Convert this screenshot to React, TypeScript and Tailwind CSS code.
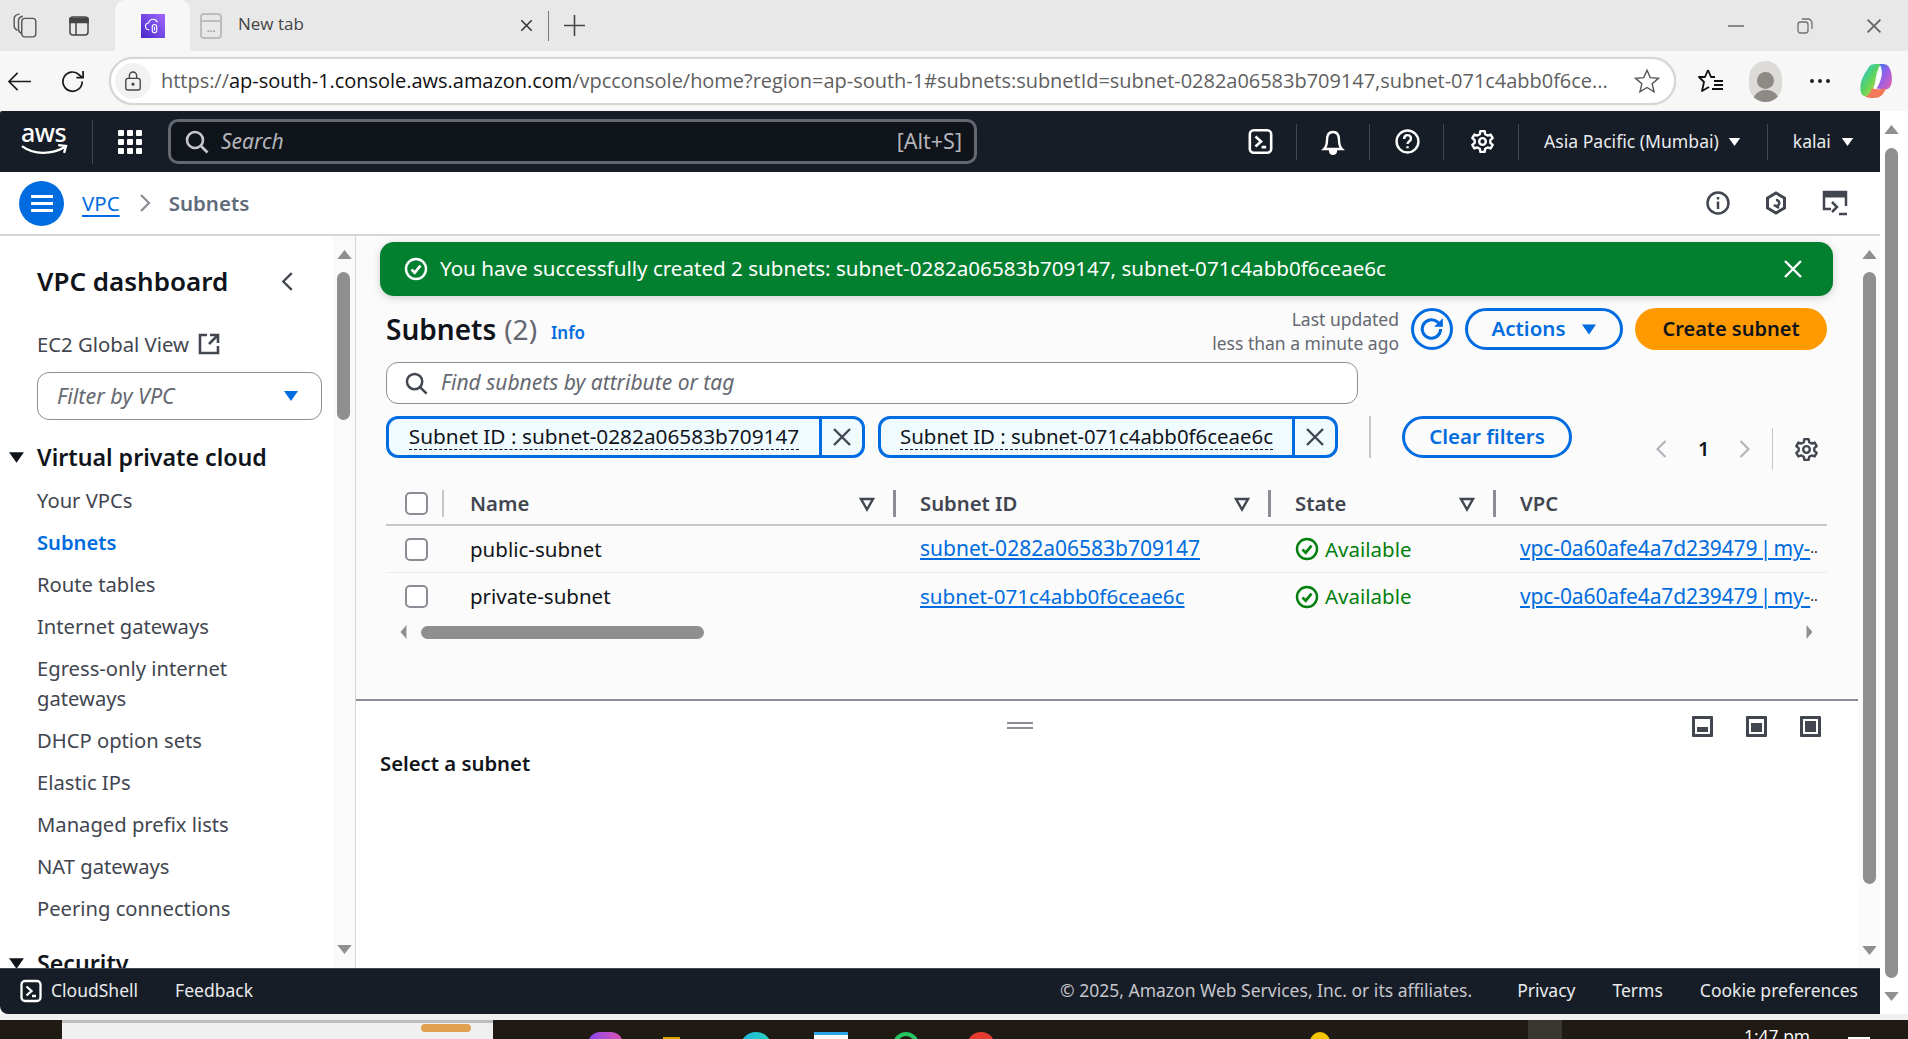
import React from "react";

const Tri = ({ className = "" }: { className?: string }) => (
  <svg viewBox="0 0 16 12" className={className} fill="currentColor"><path d="M1 1h14L8 11z" /></svg>
);
const FilterTri = () => (
  <svg viewBox="0 0 16 16" className="w-4 h-4 text-[#424650]" fill="none" stroke="currentColor" strokeWidth="2.4"><path d="M2 3h12L8 13.5z" /></svg>
);
const X = ({ className = "" }: { className?: string }) => (
  <svg viewBox="0 0 20 20" className={className} fill="none" stroke="currentColor" strokeWidth="2.4"><path d="M2 2l16 16M18 2L2 18" /></svg>
);
const Check = ({ className = "" }: { className?: string }) => (
  <svg viewBox="0 0 24 24" className={className} fill="none" stroke="currentColor" strokeWidth="2.4"><circle cx="12" cy="12" r="10" /><path d="M7.5 12.5l3.2 3.2 5.8-7" strokeWidth="2.6" /></svg>
);
const Gear = ({ className = "" }: { className?: string }) => (
  <svg viewBox="0 0 24 24" className={className} fill="none" stroke="currentColor" strokeWidth="2.3" strokeLinejoin="round"><circle cx="12" cy="12" r="3.2" /><path d="M10 2h4l.6 3 2.3 1.3 2.9-1 2 3.4-2.3 2 0 2.6 2.3 2-2 3.4-2.9-1-2.3 1.3-.6 3h-4l-.6-3-2.3-1.3-2.9 1-2-3.4 2.3-2 0-2.6-2.3-2 2-3.4 2.9 1L9.4 5z" /></svg>
);
const Search = ({ className = "" }: { className?: string }) => (
  <svg viewBox="0 0 24 24" className={className} fill="none" stroke="currentColor" strokeWidth="2.6"><circle cx="10" cy="10" r="8" /><path d="M16 16l6.5 6.5" /></svg>
);
const Chevron = ({ dir, className = "" }: { dir: "l" | "r"; className?: string }) => (
  <svg viewBox="0 0 12 20" className={className} fill="none" stroke="currentColor" strokeWidth="2.2"><path d={dir === "l" ? "M10 2L2 10l8 8" : "M2 2l8 8-8 8"} /></svg>
);
const Terminal = ({ className = "" }: { className?: string }) => (
  <svg viewBox="0 0 24 24" className={className} fill="none" stroke="currentColor" strokeWidth="2.3"><rect x="2.5" y="2" width="19" height="20" rx="3.5" /><path d="M7.5 7.5l5 4.5-5 4.5M13 17h4" /></svg>
);
const Sep = () => <div className="w-px h-[36px] bg-[#424650]" />;
const PanelIcon = ({ fill }: { fill: string }) => (
  <div className="w-[21px] h-[21px] border-[3px] border-[#424650] flex items-end p-[2px] rounded-[1px]">
    <div className={`w-full bg-[#424650] ${fill}`} />
  </div>
);

const ThScroll = ({ up }: { up: boolean }) => (
  <svg viewBox="0 0 16 10" className="w-[15px] h-[9px] text-[#8f8f8f]" fill="currentColor"><path d={up ? "M8 0l8 10H0z" : "M8 10L0 0h16z"} /></svg>
);

const Chip = ({ text, w, size }: { text: string; w: string; size: string }) => (
  <div className={`h-[42px] ${w} border-[3px] border-[#006ce0] rounded-[12px] bg-[#f0fbff] flex items-center shrink-0`}>
    <div className="flex-1 flex justify-center">
      <span className={`${size} leading-[25px] text-[#0f141a] border-b border-dashed border-[#0f141a] whitespace-nowrap`}>{text}</span>
    </div>
    <div className="w-[43px] h-full border-l-[3px] border-[#006ce0] flex items-center justify-center text-[#424650]">
      <X className="w-[20px] h-[20px]" />
    </div>
  </div>
);

const HeaderCell = ({ label, w }: { label: string; w: string }) => (
  <div className={`${w} shrink-0 flex items-center justify-between h-full`}>
    <span className="text-[20.3px] font-semibold text-[#424650]">{label}</span>
    <div className="flex items-center gap-[18px] pr-[24px]">
      <FilterTri />
      <div className="w-[3px] h-[27px] bg-[#8c8c94]" />
    </div>
  </div>
);

const Row = ({ name, id, size, last }: { name: string; id: string; size: string; last?: boolean }) => (
  <div className={`flex items-center h-[47px] ${last ? "" : "border-b border-[#ebebf0]"}`}>
    <div className="w-[84px] pl-[19px] shrink-0">
      <div className="w-[23px] h-[23px] border-2 border-[#8c8c94] rounded-[5px] bg-white" />
    </div>
    <div className="w-[450px] shrink-0 text-[20.5px] text-[#0f141a]">{name}</div>
    <div className="w-[375px] shrink-0"><a className={`${size} text-[#006ce0] underline underline-offset-2`}>{id}</a></div>
    <div className="w-[225px] shrink-0 flex items-center text-[#037f0c] text-[20.5px]">
      <Check className="w-[24px] h-[24px]" />
      <span className="ml-[6px]">Available</span>
    </div>
    <div className="flex-1 text-[21px] whitespace-nowrap text-[#0f141a] flex">
      <a className="shrink-0 text-[#006ce0] underline underline-offset-2 [word-spacing:-3px] tracking-[-0.12px]">vpc-0a60afe4a7d239479 | my-</a><span className="text-[14px] leading-[30px]">..</span>
    </div>
  </div>
);

const navItems = ["Your VPCs", "Subnets", "Route tables", "Internet gateways", "Egress-only internet gateways", "DHCP option sets", "Elastic IPs", "Managed prefix lists", "NAT gateways", "Peering connections"];

export default function App() {
  return (
    <div className="w-[1908px] h-[1039px] overflow-hidden flex flex-col font-['Noto_Sans',sans-serif] bg-[#1d1a16]">
      {/* tab strip */}
      <div className="h-[51px] bg-[#e8e8e8] flex items-center shrink-0">
        <svg viewBox="0 0 24 24" className="w-[26px] h-[26px] ml-[12px] text-[#555]" fill="none" stroke="currentColor" strokeWidth="1.3"><rect x="9" y="5" width="13" height="17" rx="3" /><path d="M9 19c-2-1-3-2-3-4V6c1-2 2-3 4-3M5 16c-2-1-3-2-3-4V5c0-2 2-4 5-4" /></svg>
        <svg viewBox="0 0 24 24" className="w-[24px] h-[24px] ml-[29px] text-[#444]" fill="none" stroke="currentColor" strokeWidth="1.5"><rect x="3" y="3" width="18" height="18" rx="3" /><path d="M3 4.5h18v4H3zM9 8.5V21" fill="currentColor" /></svg>
        <div className="w-[75px] h-[51px] ml-[24px] bg-[#f7f7f7] rounded-t-[10px] flex items-center justify-center shrink-0">
          <div className="w-[24px] h-[24px] bg-gradient-to-tr from-[#4a25c9] to-[#a166ff] flex items-center justify-center">
            <svg viewBox="0 0 24 24" className="w-[18px] h-[18px] text-white" fill="none" stroke="currentColor" strokeWidth="1.5"><path d="M7 17c-3 0-5-2-5-5s2-4 4-4c1-3 3-5 6-5s5 2 6 4" /><rect x="11" y="10" width="6" height="11" rx="3" /><path d="M14 13v5" /></svg>
          </div>
        </div>
        <div className="w-[22px] h-[26px] ml-[10px] border-2 border-[#bdbdbd] rounded-[4px] flex flex-col items-center">
          <div className="w-full h-[7px] border-b-2 border-[#bdbdbd]" />
          <div className="text-[#9a9a9a] text-[10px] leading-[10px] font-bold mt-[1px]">...</div>
        </div>
        <span className="ml-[16px] -mt-[3px] text-[#444] text-[17px] font-['Open_Sans',sans-serif]">New tab</span>
        <X className="w-[13px] h-[13px] ml-[216px] text-[#333]" />
        <div className="w-px h-[30px] bg-[#777] ml-[15px]" />
        <svg viewBox="0 0 20 20" className="w-[21px] h-[21px] ml-[15px] text-[#444]" fill="none" stroke="currentColor" strokeWidth="1.5"><path d="M10 0v20M0 10h20" /></svg>
        <div className="ml-auto flex items-center gap-[53px] pr-[26px] text-[#707070]">
          <div className="w-[16px] h-[2px] bg-[#8a8a8a]" />
          <svg viewBox="0 0 16 16" className="w-[16px] h-[16px]" fill="none" stroke="currentColor" strokeWidth="1.3"><rect x="1" y="4" width="10" height="11" rx="2.5" /><path d="M5 1h6c2 0 4 2 4 4v6" /></svg>
          <X className="w-[16px] h-[16px] text-[#666]" />
        </div>
      </div>
      {/* toolbar */}
      <div className="h-[60px] bg-[#f7f7f7] flex items-center shrink-0">
        <svg viewBox="0 0 26 22" className="w-[25px] h-[21px] ml-[7px] text-[#1a1a1a]" fill="none" stroke="currentColor" strokeWidth="1.7"><path d="M25 11H2M11 2l-9 9 9 9" /></svg>
        <svg viewBox="0 0 26 26" className="w-[25px] h-[25px] ml-[29px] text-[#1a1a1a]" fill="none" stroke="currentColor" strokeWidth="1.8"><path d="M22 13a10 10 0 1 1-3-7l3 3M23 2v7h-7" /></svg>
        <div className="ml-[23px] w-[1567px] h-[48px] rounded-full border-2 border-[#d6d6d6] bg-white flex items-center pl-[4px] pr-[14px] shadow-[0_0_1px_#ccc]">
          <div className="w-[36px] h-[36px] rounded-full bg-[#f2f2f2] flex items-center justify-center shrink-0">
            <svg viewBox="0 0 20 22" className="w-[18px] h-[20px] text-[#444]" fill="none" stroke="currentColor" strokeWidth="1.5"><rect x="2" y="8" width="16" height="13" rx="2.5" /><path d="M6 8V5a4 4 0 0 1 8 0v3" /><circle cx="10" cy="14.5" r="1" fill="currentColor" /></svg>
          </div>
          <div className="ml-[10px] text-[20px] whitespace-nowrap font-['Open_Sans',sans-serif] tracking-[-0.03px] text-[#5f5f5f]">
            https://<span className="text-[#111]">ap-south-1.console.aws.amazon.com</span>/vpcconsole/home?region=ap-south-1#subnets:subnetId=subnet-0282a06583b709147,subnet-071c4abb0f6ce...
          </div>
          <svg viewBox="0 0 24 24" className="w-[26px] h-[26px] ml-auto text-[#555]" fill="none" stroke="currentColor" strokeWidth="1.3"><path d="M12 2l3 6.9 7.5.7-5.7 5 1.7 7.4L12 18l-6.5 4 1.7-7.4-5.7-5L9 8.900z" /></svg>
        </div>
        <svg viewBox="0 0 26 26" className="w-[26px] h-[26px] ml-[22px] text-[#111]" fill="none" stroke="currentColor" strokeWidth="1.8" strokeLinejoin="round"><path d="M10 2L7 9H1l5 5-2 9 7-4M10 2l3 7h4" /><path d="M16 13h9M16 17h9M14 21h11" /></svg>
        <div className="w-[33px] h-[41px] rounded-full bg-[#dcdbd8] ml-[25px] flex flex-col items-center justify-end overflow-hidden">
          <div className="w-[17px] h-[17px] rounded-full bg-[#8e8a85] mb-[1px]" />
          <div className="w-[26px] h-[12px] rounded-t-full bg-[#8e8a85]" />
        </div>
        <div className="ml-[28px] flex gap-[4px]">
          <div className="w-[4px] h-[4px] rounded-full bg-[#222]" /><div className="w-[4px] h-[4px] rounded-full bg-[#222]" /><div className="w-[4px] h-[4px] rounded-full bg-[#222]" />
        </div>
        <svg viewBox="0 0 34 38" className="w-[33px] h-[36px] ml-[30px]">
          <defs>
            <linearGradient id="ca" x1="0" y1="0" x2="1" y2="1"><stop offset="0" stopColor="#19c3e6" /><stop offset="0.5" stopColor="#5fd35b" /><stop offset="1" stopColor="#f6d33c" /></linearGradient>
            <linearGradient id="cb" x1="0" y1="0" x2="1" y2="1"><stop offset="0" stopColor="#2b7be8" /><stop offset="0.5" stopColor="#9b5fe8" /><stop offset="1" stopColor="#e85fa8" /></linearGradient>
          </defs>
          <path d="M10 3c2-2 5-2 8-2h4c-3 3-5 9-6 16s-3 18-10 18c-4 0-6-3-6-9 0-8 5-16 10-23z" fill="url(#ca)" />
          <path d="M20 1h4c5 0 8 4 9 12 1 9-1 15-7 15-3 0-6-1-9-1 4-6 9-18 3-26z" fill="url(#cb)" />
          <path d="M12 27c4 1 8 1 15 0-3 7-6 10-13 10-5 0-8-1-9-2 3 0 6-3 7-8z" fill="#f2795a" />
          <path d="M19 10h3c-1 6-2 11-5 16h-3c2-4 4-10 5-16z" fill="#fff" />
        </svg>
      </div>
      {/* page + browser scrollbar */}
      <div className="h-[903px] flex shrink-0 bg-white rounded-br-[8px]">
        <div className="w-[1880px] shrink-0 flex flex-col overflow-hidden rounded-bl-[8px]">
          {/* AWS bar */}
          <div className="h-[61px] bg-[#161d26] flex items-center shrink-0 rounded-tl-[2px]">
            <div className="w-[93px] h-[44px] border-r border-[#424650] pl-[21px] flex flex-col shrink-0">
              <span className="text-white text-[25px] leading-[24px] tracking-[-0.5px] font-medium">aws</span>
              <svg viewBox="0 0 48 12" className="w-[47px] h-[12px] text-white" fill="none" stroke="currentColor" strokeWidth="2.4"><path d="M1 2c12 9 30 9 44 1M38 1l8 1-2 7" /></svg>
            </div>
            <div className="ml-[25px] grid grid-cols-3 gap-[3px] w-[24px] shrink-0">
              {Array.from({ length: 9 }).map((_, i) => <div key={i} className="w-[6px] h-[6px] bg-white rounded-[1px]" />)}
            </div>
            <div className="ml-[26px] w-[809px] h-[45px] bg-[#0f141a] border-[3px] border-[#656871] rounded-[10px] flex items-center pl-[14px] pr-[12px] shrink-0">
              <Search className="w-[24px] h-[24px] text-[#c6c6cd]" />
              <span className="ml-[12px] italic text-[21px] text-[#b4b4bb]">Search</span>
              <span className="ml-auto text-[21.5px] text-[#b4b4bb]">[Alt+S]</span>
            </div>
            <div className="flex items-center text-white ml-[271px]">
              <Terminal className="w-[27px] h-[27px] -ml-[1px]" />
              <div className="ml-[22px]"><Sep /></div>
              <svg viewBox="0 0 24 26" className="w-[24px] h-[26px] ml-[24px]" fill="none" stroke="currentColor" strokeWidth="2.4"><path d="M3 20c2-2 3-4 3-9 0-5 2-8 6-8s6 3 6 8c0 5 1 7 3 9z" /><path d="M9 21c0 5 6 5 6 0" fill="currentColor" /></svg>
              <div className="ml-[24px]"><Sep /></div>
              <svg viewBox="0 0 24 24" className="w-[25px] h-[25px] ml-[25px]" fill="none" stroke="currentColor" strokeWidth="2.3"><circle cx="12" cy="12" r="10.5" /><path d="M8.8 9.5c0-5 6.5-4.5 6.5-.5 0 3-3.3 2.8-3.3 5.500" /><path d="M12 16.5v2" /></svg>
              <div className="ml-[23px]"><Sep /></div>
              <Gear className="w-[25px] h-[25px] ml-[26px]" />
              <div className="ml-[23px]"><Sep /></div>
              <span className="ml-[25px] text-[17.6px] text-[#e9ebed] whitespace-nowrap">Asia Pacific (Mumbai)</span>
              <Tri className="w-[13px] h-[10px] ml-[9px]" />
              <div className="ml-[26px]"><Sep /></div>
              <span className="ml-[25px] text-[17.5px] text-[#e9ebed]">kalai</span>
              <Tri className="w-[13px] h-[10px] ml-[10px]" />
            </div>
          </div>
          {/* breadcrumb bar */}
          <div className="h-[64px] bg-white border-b-2 border-[#d5d5d9] flex items-center shrink-0 pl-[19px] pr-[32px]">
            <div className="w-[45px] h-[45px] rounded-full bg-[#006ce0] flex flex-col items-center justify-center gap-[4px]">
              <div className="w-[22px] h-[3px] bg-white" /><div className="w-[22px] h-[3px] bg-white" /><div className="w-[22px] h-[3px] bg-white" />
            </div>
            <a className="ml-[18px] text-[20.5px] text-[#006ce0] underline underline-offset-4">VPC</a>
            <Chevron dir="r" className="w-[12px] h-[20px] ml-[19px] text-[#8c8c94]" />
            <span className="ml-[18px] text-[20.5px] font-semibold text-[#5f6b7a]">Subnets</span>
            <div className="ml-auto flex items-center gap-[34px] text-[#424650]">
              <svg viewBox="0 0 24 24" className="w-[24px] h-[24px]" fill="none" stroke="currentColor" strokeWidth="2.5"><circle cx="12" cy="12" r="10.5" /><path d="M12 10.5V18M12 6v2.5" /></svg>
              <svg viewBox="0 0 24 24" className="w-[24px] h-[24px]" fill="none" stroke="currentColor" strokeWidth="3"><path d="M12 2l8.5 5v10L12 22l-8.5-5V7z" /><path d="M12 9a3 3 0 1 1-2 5l5 3" strokeWidth="2.5" /></svg>
              <svg viewBox="0 0 26 26" className="w-[26px] h-[26px]" fill="none" stroke="currentColor" strokeWidth="2.5"><path d="M9 19H2V2h22v14" /><path d="M2 5h22" strokeWidth="5" /><path d="M10 12l5 5-5 5M17 24h8" /></svg>
            </div>
          </div>
          {/* body */}
          <div className="flex-1 flex min-h-0">
            {/* sidebar */}
            <div className="w-[356px] shrink-0 border-r border-[#d5d5d9] flex overflow-hidden">
              <div className="w-[333px] shrink-0 pl-[37px] pt-[27px] overflow-hidden">
                <div className="flex items-center justify-between h-[36px] pr-[39px]">
                  <span className="text-[26px] font-semibold text-[#0f141a] whitespace-nowrap">VPC dashboard</span>
                  <Chevron dir="l" className="w-[13px] h-[21px] text-[#424650]" />
                </div>
                <div className="mt-[30px] flex items-center h-[30px] text-[20.3px] text-[#424650]">
                  EC2 Global View
                  <svg viewBox="0 0 22 22" className="w-[22px] h-[22px] ml-[9px]" fill="none" stroke="currentColor" strokeWidth="2.6"><path d="M9 2H2v18h18v-7M12 2h8v8M20 2l-9 9" /></svg>
                </div>
                <div className="mt-[13px] w-[285px] h-[48px] border border-[#8c8c94] rounded-[12px] flex items-center justify-between pl-[19px] pr-[22px]">
                  <span className="italic text-[21.5px] text-[#656871]">Filter by VPC</span>
                  <Tri className="w-[16px] h-[12px] text-[#006ce0]" />
                </div>
                <div className="mt-[20px] -ml-[29px] flex items-center h-[34px]">
                  <Tri className="w-[17px] h-[13px] text-[#0f141a]" />
                  <span className="ml-[12px] text-[23.2px] font-semibold text-[#0f141a] whitespace-nowrap">Virtual private cloud</span>
                </div>
                <div className="mt-[11px] flex flex-col gap-[12px]">
                  {navItems.map((n) => (
                    <div key={n} className={`text-[20.2px] leading-[30px] w-[220px] ${n === "Subnets" ? "text-[#006ce0] font-semibold" : "text-[#424650]"}`}>{n}</div>
                  ))}
                </div>
                <div className="-ml-[29px] flex items-center h-[34px] mt-[23px]">
                  <Tri className="w-[17px] h-[13px] text-[#0f141a]" />
                  <span className="ml-[12px] text-[23.2px] font-semibold text-[#0f141a]">Security</span>
                </div>
              </div>
              <div className="w-[22px] shrink-0 bg-[#fafafa] flex flex-col items-center pt-[14px] pb-[14px]">
                <ThScroll up />
                <div className="w-[13px] h-[148px] rounded-full bg-[#8f8f8f] mt-[13px] -ml-[1px]" />
                <div className="mt-auto"><ThScroll up={false} /></div>
              </div>
            </div>
            {/* main */}
            <div className="flex-1 flex min-w-0">
              <div className="w-[1502px] shrink-0 flex flex-col">
                <div className="h-[465px] bg-[#fbfbfb] border-b-2 border-[#8c8c94] shrink-0 pl-[24px] pt-[6px]">
                  <div className="w-[1453px] h-[54px] bg-[#037f30] rounded-[14px] flex items-center pl-[24px] pr-[30px] text-white shadow-[0_2px_8px_rgba(0,0,0,0.18)]">
                    <Check className="w-[24px] h-[24px]" />
                    <span className="ml-[12px] pb-[1px] text-[20.6px] whitespace-nowrap">You have successfully created 2 subnets: subnet-0282a06583b709147, subnet-071c4abb0f6ceae6c</span>
                    <X className="w-[20px] h-[20px] ml-auto" />
                  </div>
                  <div className="pl-[6px] w-[1447px]">
                    <div className="flex items-center h-[42px] mt-[12px]">
                      <span className="text-[28px] font-semibold text-[#0f141a]">Subnets</span>
                      <span className="ml-[8px] text-[28px] text-[#656871]">(2)</span>
                      <span className="ml-[14px] text-[17px] mt-[8px] font-semibold text-[#006ce0]">Info</span>
                      <div className="ml-auto mt-[4px] text-right text-[17.5px] leading-[24px] text-[#656871]">
                        <div>Last updated</div>
                        <div>less than a minute ago</div>
                      </div>
                      <div className="ml-[12px] w-[42px] h-[42px] rounded-full border-[3px] border-[#006ce0] flex items-center justify-center text-[#006ce0] shrink-0">
                        <svg viewBox="0 0 24 24" className="w-[26px] h-[26px]" fill="none" stroke="currentColor" strokeWidth="2.8"><path d="M20 12a8.5 8.5 0 1 1-3-6.5l2 2" /><path d="M21.5 2.5v7h-7" fill="currentColor" strokeWidth="1" /></svg>
                      </div>
                      <div className="ml-[12px] w-[158px] h-[42px] rounded-full border-[3px] border-[#006ce0] flex items-center justify-center text-[#006ce0] shrink-0">
                        <span className="text-[20.5px] pb-[2px] font-semibold">Actions</span>
                        <Tri className="w-[16px] h-[13px] ml-[15px]" />
                      </div>
                      <div className="ml-[12px] w-[192px] h-[42px] rounded-full bg-[#ff9900] flex items-center justify-center text-[20px] font-semibold text-[#0f141a] shrink-0">Create subnet</div>
                    </div>
                    <div className="mt-[12px] w-[972px] h-[42px] bg-white border border-[#8c8c94] rounded-[12px] flex items-center pl-[18px]">
                      <Search className="w-[23px] h-[23px] text-[#424650]" />
                      <span className="ml-[13px] italic text-[21px] text-[#656871]">Find subnets by attribute or tag</span>
                    </div>
                    <div className="mt-[12px] flex items-start h-[54px]">
                      <Chip w="w-[479px]" size="text-[20.8px]" text="Subnet ID : subnet-0282a06583b709147" />
                      <div className="w-[13px] shrink-0" />
                      <Chip w="w-[460px]" size="text-[20.4px]" text="Subnet ID : subnet-071c4abb0f6ceae6c" />
                      <div className="ml-[31px] w-[2px] h-[42px] bg-[#c6c6cd] shrink-0" />
                      <div className="ml-[31px] w-[170px] h-[42px] rounded-full border-[3px] border-[#006ce0] flex items-center justify-center pb-[2px] text-[20.5px] font-semibold text-[#006ce0] shrink-0">Clear filters</div>
                      <div className="flex items-center h-[42px] mt-[12px] ml-[83px]">
                        <Chevron dir="l" className="w-[13px] h-[20px] text-[#b4b4bb]" />
                        <span className="ml-[30px] text-[20px] font-semibold text-[#0f141a] w-[12px]">1</span>
                        <Chevron dir="r" className="w-[13px] h-[20px] ml-[28px] text-[#b4b4bb]" />
                        <div className="ml-[21px] w-px h-[42px] bg-[#c6c6cd]" />
                        <Gear className="w-[25px] h-[25px] ml-[21px] text-[#424650]" />
                      </div>
                    </div>
                    {/* table */}
                    <div className="w-[1441px] mt-[13px]">
                      <div className="flex items-center h-[43px] border-b-2 border-[#c6c6cd]">
                        <div className="w-[84px] h-full shrink-0 pl-[19px] flex items-center">
                          <div className="w-[23px] h-[23px] border-2 border-[#8c8c94] rounded-[5px] bg-white shrink-0" />
                          <div className="ml-[14px] w-[2px] h-[27px] bg-[#c6c6cd]" />
                        </div>
                        <HeaderCell w="w-[450px]" label="Name" />
                        <HeaderCell w="w-[375px]" label="Subnet ID" />
                        <HeaderCell w="w-[225px]" label="State" />
                        <span className="text-[20.3px] font-semibold text-[#424650]">VPC</span>
                      </div>
                      <Row name="public-subnet" size="text-[21px]" id="subnet-0282a06583b709147" />
                      <Row name="private-subnet" size="text-[20.6px]" id="subnet-071c4abb0f6ceae6c" last />
                      <div className="flex items-center h-[24px] pl-[14px] pr-[14px]">
                        <svg viewBox="0 0 6 14" className="w-[7px] h-[14px] text-[#8f8f8f]" fill="currentColor"><path d="M6 0v14L0 7z" /></svg>
                        <div className="ml-[14px] w-[283px] h-[13px] rounded-full bg-[#8f8f8f]" />
                        <svg viewBox="0 0 6 14" className="ml-auto w-[7px] h-[14px] text-[#8f8f8f]" fill="currentColor"><path d="M0 0v14l6-7z" /></svg>
                      </div>
                    </div>
                  </div>
                </div>
                <div className="flex-1 bg-white pl-[24px] pr-[37px] pt-[15px]">
                  <div className="flex items-start h-[23px]">
                    <div className="ml-[627px] mt-[6px] w-[26px] h-[7px] border-y-2 border-[#8c8c94]" />
                    <div className="ml-auto flex gap-[33px]">
                      <PanelIcon fill="h-[5px]" />
                      <PanelIcon fill="h-[9px]" />
                      <PanelIcon fill="h-full" />
                    </div>
                  </div>
                  <div className="mt-[9px] text-[20.3px] font-semibold text-[#0f141a]">Select a subnet</div>
                </div>
              </div>
              <div className="flex-1 bg-[#fbfbfb] flex flex-col items-center pt-[14px] pb-[13px]">
                <ThScroll up />
                <div className="w-[13px] h-[612px] rounded-full bg-[#8f8f8f] mt-[13px]" />
                <div className="mt-auto"><ThScroll up={false} /></div>
              </div>
            </div>
          </div>
          {/* footer */}
          <div className="h-[46px] bg-[#161d26] flex items-center shrink-0 pl-[19px] pr-[22px] pb-[2px] text-[17.5px] text-[#e9ebed] border-t border-[#424650]">
            <Terminal className="w-[24px] h-[24px] text-white" />
            <span className="ml-[8px]">CloudShell</span>
            <span className="ml-[37px]">Feedback</span>
            <span className="ml-auto text-[#c6c6cd]">© 2025, Amazon Web Services, Inc. or its affiliates.</span>
            <span className="ml-[45px]">Privacy</span>
            <span className="ml-[37px]">Terms</span>
            <span className="ml-[37px]">Cookie preferences</span>
          </div>
        </div>
        {/* browser scrollbar */}
        <div className="w-[28px] flex flex-col pl-[5px] pr-[10px] items-center pt-[14px] pb-[13px] bg-white">
          <ThScroll up />
          <div className="w-[13px] h-[830px] rounded-full bg-[#8f8f8f] mt-[14px]" />
          <div className="mt-auto"><ThScroll up={false} /></div>
        </div>
      </div>
      <div className="h-[6px] bg-[#f0f0f0] shrink-0" />
      {/* taskbar */}
      <div className="flex-1 flex items-start overflow-hidden bg-[#1f1a14]">
        <div className="ml-[62px] w-[431px] h-[19px] bg-[#f0f0f0] border-t-[3px] border-[#bdbdbd] shrink-0 flex justify-end pr-[22px]">
          <div className="w-[50px] h-[8px] rounded-full bg-[#e0a050] mt-[1px]" />
        </div>
        <div className="ml-[95px] w-[35px] h-[20px] mt-[12px] rounded-t-[12px] bg-gradient-to-r from-[#8a3ff0] to-[#e04fb0] shrink-0" />
        <div className="ml-[40px] w-[17px] h-[10px] mt-[17px] bg-[#d9a400] shrink-0" />
        <div className="ml-[60px] w-[32px] h-[20px] mt-[12px] rounded-t-full bg-gradient-to-r from-[#1fb6e0] to-[#2dd4bf] shrink-0" />
        <div className="ml-[42px] w-[34px] h-[16px] mt-[12px] bg-white border-t-[3px] border-[#2aa5e8] shrink-0" />
        <div className="ml-[45px] w-[26px] h-[20px] mt-[12px] rounded-t-full border-[4px] border-b-0 border-[#22c55e] shrink-0" />
        <div className="ml-[48px] w-[28px] h-[20px] mt-[12px] rounded-t-full bg-[#e53b2e] shrink-0" />
        <div className="ml-[315px] w-[20px] h-[10px] mt-[12px] rounded-t-full bg-[#f5c400] shrink-0" />
        <div className="ml-[198px] w-[34px] h-[19px] bg-[#3a3733] shrink-0" />
        <span className="ml-[182px] mt-[6px] text-[17.5px] leading-[20px] text-white whitespace-nowrap font-['Open_Sans',sans-serif] shrink-0">1:47 pm</span>
        <div className="ml-[38px] w-[22px] h-[2px] mt-[17px] bg-white shrink-0" />
      </div>
    </div>
  );
}
